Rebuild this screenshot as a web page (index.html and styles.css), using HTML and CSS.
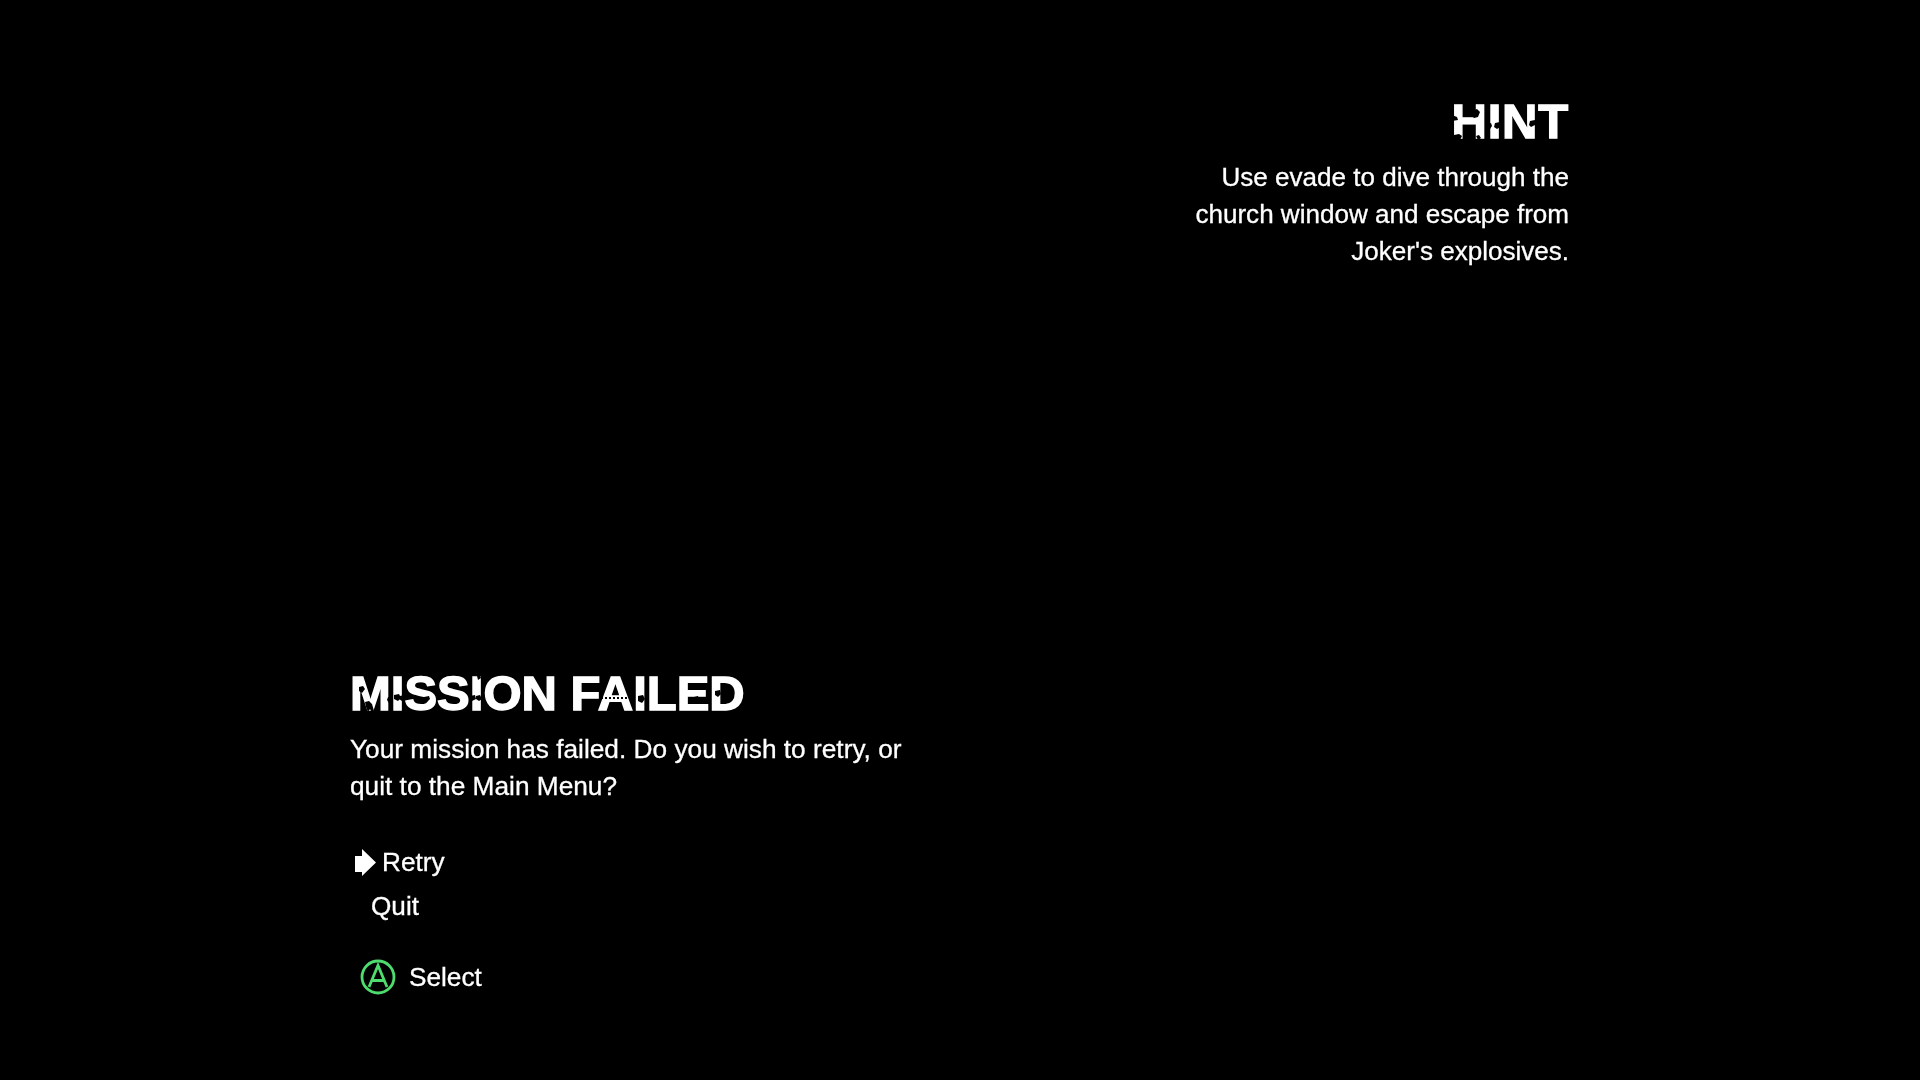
FILE: index.html
```html
<!DOCTYPE html>
<html lang="en">
<head>
<meta charset="utf-8">
<title>Mission Failed</title>
<link rel="stylesheet" href="styles.css">
</head>
<body>
<main class="screen">
  <section class="hint">
    <div class="heading">
      <h2 class="title">HINT</h2>
      <svg class="wear wear-hint" viewBox="0 0 130 56" aria-hidden="true">
        <path d="M33 18l5-2 3 3-2 5-4 1-3-3z"/>
        <path d="M15 42l5-1 3 2-2 4-5 1-3-2z"/>
        <path d="M13 22l5 2 1 3-6 1z"/>
        <path d="M47 31l5-1 1 3-2 3-4-1z"/>
        <path d="M56 30l5-1 2 4-5 3-3-2z"/>
        <path d="M91 28l5-1v5l-4 2-2-2z"/>
        <path d="M37 43l3-1 2 3-3 2z"/>
      </svg>
    </div>
    <p class="copy">Use evade to dive through the<br>church window and escape from<br>Joker's explosives.</p>
  </section>
  <section class="failed">
    <div class="heading">
      <h1 class="title">MISSION FAILED</h1>
      <svg class="wear wear-failed" viewBox="0 0 400 56" aria-hidden="true">
        <path d="M15 37l4-1 3 3 2 7-2 2-2-4-2 3-2-5z"/>
        <path d="M9 22l4-1 2 3-3 4-3-2z"/>
        <path d="M38 32l3 1 1 4-3 1-2-3z"/>
        <path d="M44 30l5-1 2 4-3 3-4-2z"/>
        <path d="M50 31l4-1 1 3-3 3-3-2z"/>
        <path d="M74 32l5-1 1 3-3 3-4-2z"/>
        <path d="M120 31l5-1 1 4-4 2-3-2z"/>
        <path d="M126 31l4-1 2 4-3 2-3-2z"/>
        <path d="M127 11l3-1 1 3-3 2z"/>
        <path d="M217 33l4-1 1 3-3 2-2-2z"/>
        <path d="M288 31l5-1 2 4-3 4-4-2z"/>
        <path d="M310 21l3-1 2 3-2 4-3-2z"/>
        <path d="M344 32l4-1 1 3-3 2-2-2z"/>
        <path d="M365 26l5-1 1 4-3 3-3-2z"/>
        <path class="dots" d="M251 33h31"/>
      </svg>
    </div>
    <p class="copy">Your mission has failed. Do you wish to retry, or<br>quit to the Main Menu?</p>
    <ul class="menu">
      <li class="item selected">
        <svg class="arrow" viewBox="0 0 21 27"><path d="M0 7H7V0L21 13.500 7 27V23H0Z"/></svg>
        <span>Retry</span>
      </li>
      <li class="item">Quit</li>
    </ul>
    <div class="prompt">
      <svg class="abtn" viewBox="0 0 36 36"><circle cx="18" cy="18" r="16" /><path d="M9 28 18 6.500 27 28M12 21.500h12"/></svg>
      <span>Select</span>
    </div>
  </section>
</main>
</body>
</html>
```
FILE: styles.css
```css
* { box-sizing: border-box; }
html, body { margin: 0; height: 100%; background: #000; }
.screen {
  width: 1920px;
  height: 1080px;
  padding: 93px 351px 0 350px;
  display: flex;
  flex-direction: column;
  color: #fff;
  font-family: "Liberation Sans", Arial, sans-serif;
  font-size: 26.200px;
  overflow: hidden;
  filter: blur(0.5px);
}
.heading { position: relative; }
.title {
  margin: 0;
  font-family: "Liberation Sans", sans-serif;
  font-weight: 700;
  font-size: 49px;
  line-height: 56px;
  -webkit-text-stroke: 1.400px #fff;
}
.hint .title { letter-spacing: 0.800px; }
.wear { position: absolute; top: 0; height: 56px; fill: #000; }
.wear-hint { right: 0; width: 130px; }
.wear-failed { left: 0; width: 400px; }
.dots { fill: none; stroke: #000; stroke-width: 2; stroke-dasharray: 2 2; }
.copy {
  margin: 0;
  line-height: 37px;
  -webkit-text-stroke: 0.300px #fff;
}
.hint { text-align: right; }
.hint .copy { margin-top: 10px; font-size: 26.050px; }
.failed { margin-top: 395px; }
.failed .copy { margin-top: 10px; font-size: 26.250px; }
.menu { list-style: none; margin: 35px 0 0; padding: 0 0 0 21px; -webkit-text-stroke: 0.300px #fff; }
.item { height: 44px; line-height: 44px; display: flex; align-items: center; }
.selected { margin-left: -6px; }
.arrow { width: 21px; height: 27px; fill: #fff; margin-right: 6px; margin-left: -10px; }
.prompt { display: flex; align-items: center; margin-top: 31px; padding-left: 10px; -webkit-text-stroke: 0.300px #fff; }
.abtn { width: 36px; height: 36px; fill: none; stroke: #4fdc6e; stroke-width: 2.800; margin-right: 13px; }
```
